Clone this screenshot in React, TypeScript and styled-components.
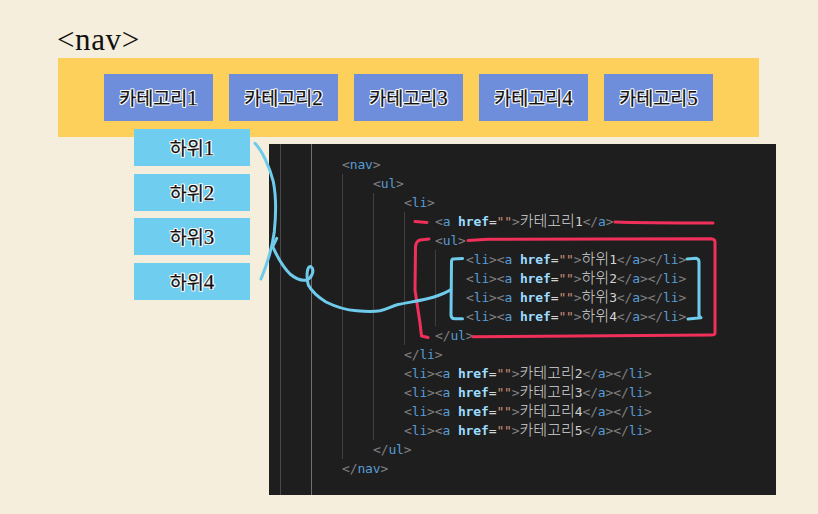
import React from "react";
import styled, { createGlobalStyle } from "styled-components";

const GlobalStyle = createGlobalStyle`
  html, body {
    margin: 0;
    padding: 0;
    background: #f5eedc;
  }
`;

const Page = styled.div`
  position: relative;
  width: 818px;
  height: 514px;
  overflow: hidden;
  padding-left: 58px;
  box-sizing: border-box;
  font-family: "Liberation Serif", "Noto Sans CJK KR", serif;
`;

const Title = styled.h1`
  margin: 0 0 0 -1px;
  padding-top: 22px;
  height: 36px;
  font-size: 31px;
  letter-spacing: 0.6px;
  line-height: 36px;
  font-weight: 400;
  color: #111;
`;

const NavBar = styled.ul`
  display: flex;
  gap: 16px;
  width: 701px;
  height: 79px;
  margin: 0;
  padding: 16px 0 0 46px;
  box-sizing: border-box;
  list-style: none;
  background: #fdd05c;
`;

const outlinedLabel = `
  color: #111;
  font-size: 18.5px;
  -webkit-text-stroke: 0.25px #111;
  text-shadow: 1px 0 0 #fff, -1px 0 0 #fff, 0 1px 0 #fff, 0 -1px 0 #fff,
    1px 1px 0 #fff, -1px 1px 0 #fff, 1px -1px 0 #fff, -1px -1px 0 #fff;
`;

const NavItem = styled.li`
  width: 109px;
  height: 47px;
  display: flex;
  align-items: center;
  justify-content: center;
  background: #6e8edb;
  ${outlinedLabel}
`;

const Digit = styled.span`
  font-size: 21px;
`;

const Lower = styled.div`
  display: flex;
  align-items: flex-start;
  margin-top: -8px;
`;

const SubMenu = styled.ul`
  display: flex;
  flex-direction: column;
  gap: 7.67px;
  margin: 0 0 0 76px;
  padding: 0;
  list-style: none;
`;

const SubItem = styled.li`
  width: 116px;
  height: 37px;
  display: flex;
  align-items: center;
  justify-content: center;
  background: #6fcdef;
  ${outlinedLabel}
`;

const CodePanel = styled.div`
  width: 507px;
  height: 351px;
  margin: 15px 0 0 19px;
  padding-left: 11px;
  box-sizing: border-box;
  background: #1e1e1e;
  font-family: "DejaVu Sans Mono", "Noto Sans CJK KR", monospace;
  font-size: 13px;
  letter-spacing: -0.13px;
  line-height: 19px;
`;

const OuterGuide = styled.div<{ $bright?: boolean }>`
  height: 100%;
  box-sizing: border-box;
  padding-left: 30px;
  border-left: 1px solid ${(p) => (p.$bright ? "#707070" : "#484848")};
`;

const CodeBody = styled.div`
  padding-top: 11px;
`;

const Indent = styled.div`
  padding-left: 30px;
  border-left: 1px solid #404040;
`;

const Line = styled.div`
  height: 19px;
  white-space: pre;
  color: #d4d4d4;
`;

const Punct = styled.span`
  color: #808080;
`;

const TagName = styled.span`
  color: #569cd6;
`;

const Attr = styled.span`
  color: #9cdcfe;
  font-weight: 700;
`;

const Str = styled.span`
  color: #ce9178;
`;

const Hangul = styled.span`
  font-size: 15px;
  font-weight: 300;
  letter-spacing: 0;
  color: #d4d4d4;
`;

const Scribbles = styled.svg`
  position: absolute;
  left: 0;
  top: 0;
  pointer-events: none;
`;

const Open = ({ name }: { name: string }) => (
  <>
    <Punct>&lt;</Punct>
    <TagName>{name}</TagName>
    <Punct>&gt;</Punct>
  </>
);

const Close = ({ name }: { name: string }) => (
  <>
    <Punct>&lt;/</Punct>
    <TagName>{name}</TagName>
    <Punct>&gt;</Punct>
  </>
);

const Link = ({ label, num }: { label: string; num: number }) => (
  <>
    <Punct>&lt;</Punct>
    <TagName>a</TagName> <Attr>href</Attr>
    <span>=</span>
    <Str>""</Str>
    <Punct>&gt;</Punct>
    <Hangul>{label}</Hangul>
    {num}
    <Close name="a" />
  </>
);

const ItemLine = ({ label, num }: { label: string; num: number }) => (
  <Line>
    <Open name="li" />
    <Link label={label} num={num} />
    <Close name="li" />
  </Line>
);

const categories = [1, 2, 3, 4, 5];
const subs = [1, 2, 3, 4];

const App: React.FC = () => {
  return (
    <Page>
      <GlobalStyle />
      <Title>&lt;nav&gt;</Title>
      <NavBar>
        {categories.map((n) => (
          <NavItem key={n}>
            <span>
              카테고리<Digit>{n}</Digit>
            </span>
          </NavItem>
        ))}
      </NavBar>
      <Lower>
        <SubMenu>
          {subs.map((n) => (
            <SubItem key={n}>
              <span>
                하위<Digit>{n}</Digit>
              </span>
            </SubItem>
          ))}
        </SubMenu>
        <CodePanel>
          <OuterGuide>
            <OuterGuide $bright>
              <CodeBody>
                <Line>
                  <Open name="nav" />
                </Line>
                <Indent>
                  <Line>
                    <Open name="ul" />
                  </Line>
                  <Indent>
                    <Line>
                      <Open name="li" />
                    </Line>
                    <Indent>
                      <Line>
                        <Link label="카테고리" num={1} />
                      </Line>
                      <Line>
                        <Open name="ul" />
                      </Line>
                      <Indent>
                        {subs.map((n) => (
                          <ItemLine key={n} label="하위" num={n} />
                        ))}
                      </Indent>
                      <Line>
                        <Close name="ul" />
                      </Line>
                    </Indent>
                    <Line>
                      <Close name="li" />
                    </Line>
                    {categories.slice(1).map((n) => (
                      <ItemLine key={n} label="카테고리" num={n} />
                    ))}
                  </Indent>
                  <Line>
                    <Close name="ul" />
                  </Line>
                </Indent>
                <Line>
                  <Close name="nav" />
                </Line>
              </CodeBody>
            </OuterGuide>
          </OuterGuide>
        </CodePanel>
      </Lower>
      <Scribbles width="818" height="514" viewBox="0 0 818 514" fill="none" strokeLinecap="round" strokeLinejoin="round">
        <g stroke="#f0305a" strokeWidth="3">
          <path d="M415 221.5 L427 222.5" />
          <path d="M615 222 C 640 223, 680 223, 713 223" />
          <path d="M429 239 L420 240 Q416 241 415.5 247 L415 290 L420 323 L421.5 336 L428 337.5" />
          <path d="M468 240.5 L488 239.3 L711 238.7 Q715 239 715 242 L715 333 Q715 335 711 335 L473 336.7" />
        </g>
        <g stroke="#6ecbeb" strokeWidth="3">
          <path d="M462.5 258.5 L453 259 Q451.5 259.5 451.5 262 L451 315 Q451 318.7 455 318.7 L462.5 318.7" />
          <path d="M687 259 L696 258.3 Q699 259 699 262 L699 316 L701 317.7 L688 319" />
          <path d="M255 143.3 C 262 150, 270 168, 273.3 181.7 C 276 195, 276 215, 274.3 231.7 C 273 242, 268 262, 261 279" />
          <path d="M276.7 238.3 L272.7 246.7 C 276 254, 282 266, 290 274 C 296 279, 302 281, 306.7 280 C 312 278, 315 270, 311 266.7 C 307 265, 306 276, 308.3 285 C 312 292, 318 297, 326 302 C 336 307, 346 310, 356.7 310.7 C 365 311.5, 373 312, 380 310.7 C 388 309, 392 306, 398 304.5 C 410 302, 425 300, 434 297 C 440 295, 446 293, 451 289.5" />
        </g>
      </Scribbles>
    </Page>
  );
};

export default App;
